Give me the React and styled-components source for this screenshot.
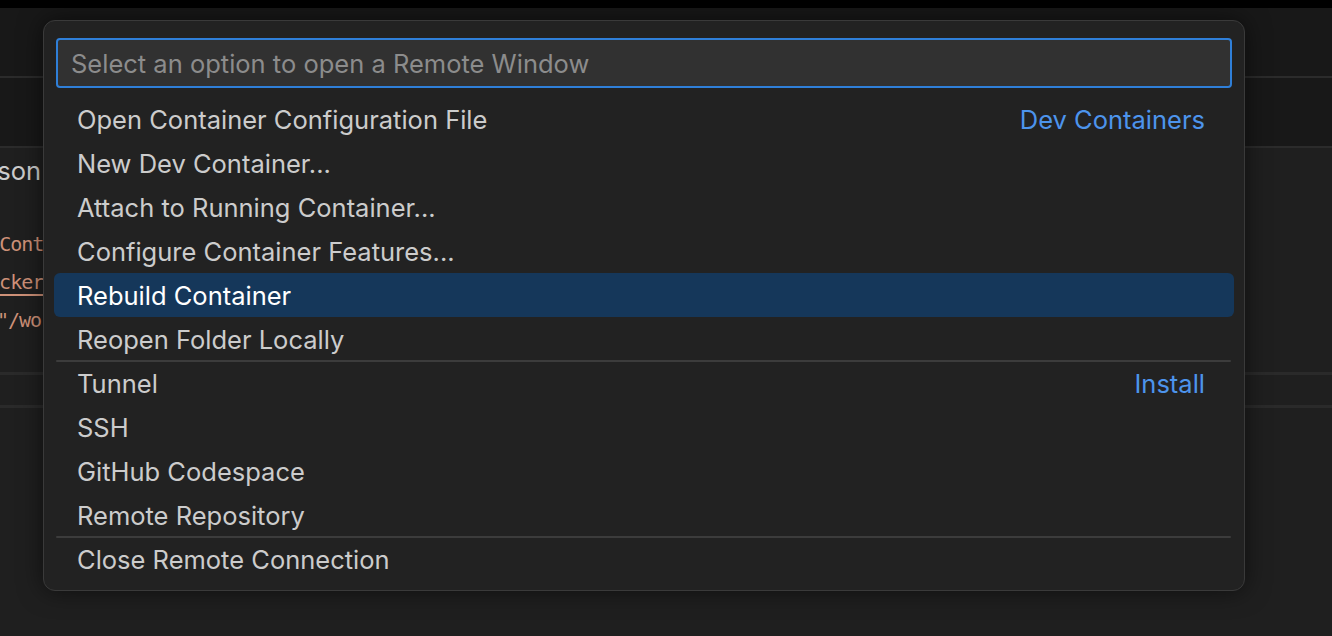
import React from 'react'
import styled, { createGlobalStyle } from 'styled-components'

const GlobalStyle = createGlobalStyle`
  html, body {
    margin: 0;
    padding: 0;
    background: #1f1f1f;
    overflow: hidden;
  }
  body {
    font-family: Inter, "Noto Sans", sans-serif;
  }
`

const Page = styled.div`
  position: relative;
  width: 1332px;
  height: 636px;
  display: flex;
  flex-direction: column;
  background: #1f1f1f;
  overflow: hidden;
`

const TopStrip = styled.div`
  height: 8px;
  background: #000;
`

const Bar = styled.div`
  height: 68px;
  background: #181818;
  border-bottom: 2px solid #2b2b2b;
`

const Editor = styled.div`
  height: 224px;
  background: #1f1f1f;
  padding-top: 10px;
  box-sizing: border-box;
`

const Crumb = styled.div`
  font-size: 25.5px;
  color: #cccccc;
  height: 26px;
  line-height: 26px;
  margin-left: -9px;
`

const Code = styled.div`
  margin-top: 41px;
  font-family: "DejaVu Sans Mono", "Liberation Mono", monospace;
  font-size: 20px;
  letter-spacing: -1px;
  line-height: 38px;
  color: #ce9178;
`

const CodeLine = styled.div`
  white-space: pre;
  margin-left: ${p => p.$shift || 0}px;
  text-decoration: ${p => (p.$link ? 'underline' : 'none')};
  text-underline-offset: 5px;
`

const PanelStrip = styled.div`
  height: 30px;
  border-top: 3px solid #2a2a2a;
  border-bottom: 3px solid #2a2a2a;
`

const Widget = styled.div`
  position: absolute;
  left: 43px;
  top: 20px;
  width: 1202px;
  box-sizing: border-box;
  background: #222222;
  border: 1px solid #3a3a3a;
  border-radius: 12px;
  box-shadow: 0 0 24px rgba(0, 0, 0, 0.55);
  padding: 17px 10px 9px 10px;
  display: flex;
  flex-direction: column;
`

const InputBox = styled.div`
  margin: 0 2px;
  height: 50px;
  box-sizing: border-box;
  background: #313131;
  border: 2px solid #2f7fd8;
  border-radius: 4px;
  display: flex;
  align-items: center;
  padding-left: 13px;
  font-size: 25.5px;
  color: #8c8c8c;
`

const List = styled.div`
  margin-top: 9px;
  display: flex;
  flex-direction: column;
`

const Row = styled.div`
  position: relative;
  height: 44px;
  display: flex;
  align-items: center;
  justify-content: space-between;
  padding: 0 29px 0 23px;
  border-radius: 6px;
  font-size: 25.5px;
  color: ${p => (p.$selected ? '#ffffff' : '#cccccc')};
  background: ${p => (p.$selected ? '#15375a' : 'transparent')};

  &::before {
    content: '';
    display: ${p => (p.$separator ? 'block' : 'none')};
    position: absolute;
    top: -1px;
    left: 2px;
    right: 3px;
    height: 2px;
    border-radius: 1px;
    background: #3c3c3c;
  }
`

const Desc = styled.span`
  color: #4d94ec;
`

const items = [
  { label: 'Open Container Configuration File', desc: 'Dev Containers' },
  { label: 'New Dev Container...' },
  { label: 'Attach to Running Container...' },
  { label: 'Configure Container Features...' },
  { label: 'Rebuild Container', selected: true },
  { label: 'Reopen Folder Locally' },
  { label: 'Tunnel', desc: 'Install', separator: true },
  { label: 'SSH' },
  { label: 'GitHub Codespace' },
  { label: 'Remote Repository' },
  { label: 'Close Remote Connection', separator: true },
]

export default function App() {
  return (
    <Page>
      <GlobalStyle />
      <TopStrip />
      <Bar />
      <Bar />
      <Editor>
        <Crumb>json</Crumb>
        <Code>
          <CodeLine $shift={-45}>"devCont</CodeLine>
          <CodeLine $shift={-34} $link>"docker</CodeLine>
          <CodeLine $shift={-3}>"/workspace"</CodeLine>
        </Code>
      </Editor>
      <PanelStrip />

      <Widget>
        <InputBox>Select an option to open a Remote Window</InputBox>
        <List>
          {items.map(item => (
            <Row
              key={item.label}
              $selected={item.selected}
              $separator={item.separator}
            >
              <span>{item.label}</span>
              {item.desc && <Desc>{item.desc}</Desc>}
            </Row>
          ))}
        </List>
      </Widget>
    </Page>
  )
}
